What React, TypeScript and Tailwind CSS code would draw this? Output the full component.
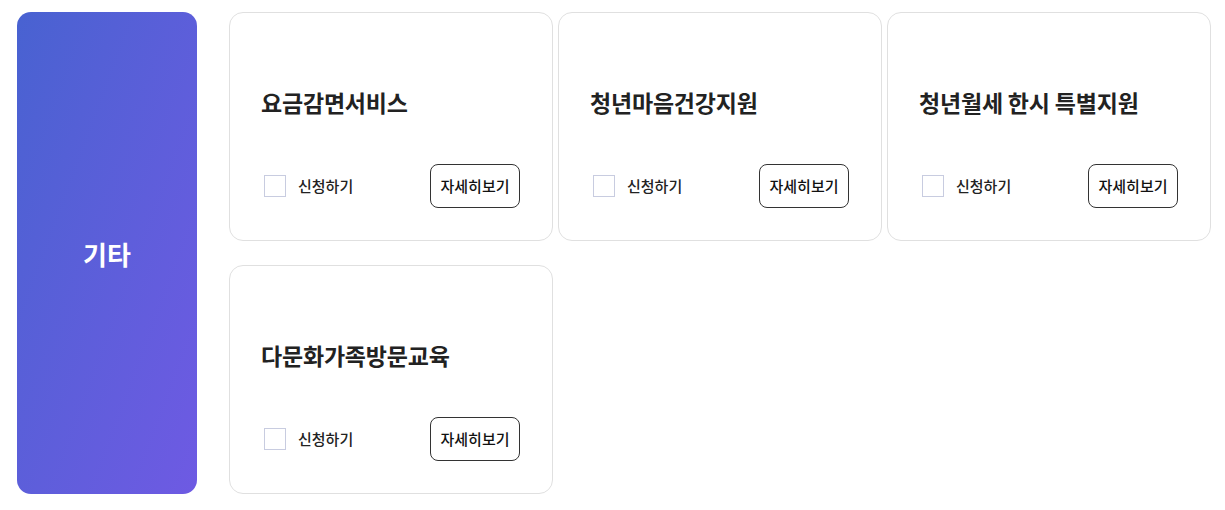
import React from 'react';

const items = ['요금감면서비스', '청년마음건강지원', '청년월세 한시 특별지원', '다문화가족방문교육'];

function ServiceCard({ title }: { title: string }) {
  return (
    <div className="h-[229px] bg-white border border-[#e0e0e0] rounded-[14px] pt-[74px] pl-[31px] pr-8 pb-[31px] flex flex-col">
      <h3 className="text-[23px] leading-[30px] font-bold text-[#222] tracking-[-0.2px]">{title}</h3>
      <div className="mt-[47px] flex items-center justify-between">
        <label className="flex items-center gap-3 pl-[3px] cursor-pointer">
          <span className="w-[22px] h-[22px] border border-[#c8cce0] bg-white" />
          <span className="text-[15px] font-medium text-[#222]">신청하기</span>
        </label>
        <button className="w-[90px] h-[44px] border border-[#333] rounded-[8px] text-[15px] font-medium text-[#111] bg-white">
          자세히보기
        </button>
      </div>
    </div>
  );
}

export default function App() {
  return (
    <div
      className="w-[1225px] h-[510px] bg-white flex pt-3 pl-[17px]"
      style={{ fontFamily: '"Noto Sans CJK KR", "Noto Sans", sans-serif' }}
    >
      {/* Category */}
      <div className="w-[180px] h-[482px] rounded-[14px] bg-gradient-to-br from-[#4862d1] to-[#6e5ae3] flex items-center justify-center">
        <span className="text-white text-[26px] font-bold">기타</span>
      </div>

      {/* Cards */}
      <div className="ml-8 w-[982px] grid grid-cols-3 gap-x-[5px] gap-y-6 content-start">
        {items.map((t) => (
          <ServiceCard key={t} title={t} />
        ))}
      </div>
    </div>
  );
}
